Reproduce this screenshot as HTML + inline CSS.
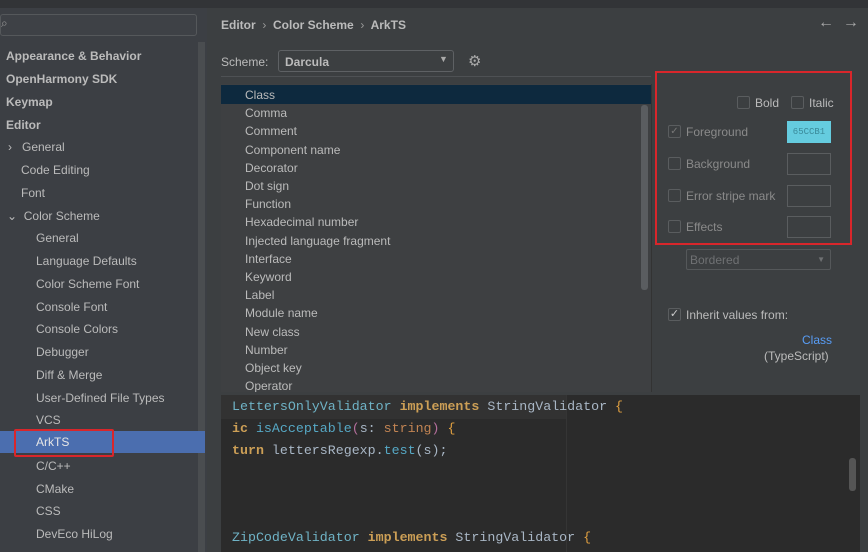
<!DOCTYPE html><html><head><style>
*{margin:0;padding:0;box-sizing:border-box}
body{width:868px;height:552px;overflow:hidden;background:#3c3f41;font-family:"Liberation Sans",sans-serif;font-size:12px;color:#bbbbbb;position:relative}
.a{position:absolute;white-space:nowrap}
.side div{position:absolute;left:0;width:198px;height:22px;line-height:22px}
.b{font-weight:bold}
.list div{position:absolute;left:24px;line-height:18px}
.mono{font-family:"Liberation Mono",monospace;font-size:13.3px}
.cb{position:absolute;width:13px;height:13px;border:1px solid #5a5d5f;border-radius:2px;background:#3c3f41}
.sw{position:absolute;left:787px;width:44px;height:22px;border:1px solid #5a5d5f}
</style></head><body>
<div class="a" style="left:0;top:0;width:868px;height:8px;background:#323437"></div>
<div class="a" style="left:0;top:8px;width:207px;height:544px;background:#3c3f44"></div>
<div class="a" style="left:0;top:14px;width:197px;height:22px;border:1px solid #55585b;border-radius:3px;background:#3e4146"></div>
<div class="a" style="left:1px;top:16px;color:#999">&#x2315;</div>
<div class="a" style="left:198px;top:42px;width:7px;height:510px;background:#4a4d50"></div>
<div class="side" style="position:absolute;left:0;top:1px">
<div class="b" style="top:44px;padding-left:6px">Appearance &amp; Behavior</div>
<div class="b" style="top:67px;padding-left:6px">OpenHarmony SDK</div>
<div class="b" style="top:90px;padding-left:6px">Keymap</div>
<div class="b" style="top:113px;padding-left:6px">Editor</div>
<div style="top:135px;padding-left:8px">›&nbsp;&nbsp; General</div>
<div style="top:158px;padding-left:21px">Code Editing</div>
<div style="top:181px;padding-left:21px">Font</div>
<div style="top:204px;padding-left:7px">⌄&nbsp; Color Scheme</div>
<div style="top:226px;padding-left:36px">General</div>
<div style="top:249px;padding-left:36px">Language Defaults</div>
<div style="top:272px;padding-left:36px">Color Scheme Font</div>
<div style="top:295px;padding-left:36px">Console Font</div>
<div style="top:317px;padding-left:36px">Console Colors</div>
<div style="top:340px;padding-left:36px">Debugger</div>
<div style="top:363px;padding-left:36px">Diff &amp; Merge</div>
<div style="top:386px;padding-left:36px">User-Defined File Types</div>
<div style="top:408px;padding-left:36px">VCS</div>
<div style="top:430px;padding-left:36px;width:205px;background:#4b6eaf;color:#e6e6e6">ArkTS</div>
<div style="top:454px;padding-left:36px">C/C++</div>
<div style="top:477px;padding-left:36px">CMake</div>
<div style="top:499px;padding-left:36px">CSS</div>
<div style="top:522px;padding-left:36px">DevEco HiLog</div>
</div>
<div class="a" style="left:14px;top:429px;width:100px;height:28px;border:2px solid #d9262b;border-radius:2px"></div>
<div class="a b" style="left:221px;top:18px">Editor &nbsp;<span style="font-weight:normal;color:#999">›</span>&nbsp; Color Scheme &nbsp;<span style="font-weight:normal;color:#999">›</span>&nbsp; ArkTS</div>
<div class="a" style="left:818px;top:14px;font-size:16px;color:#aaa">←&nbsp;&nbsp;→</div>
<div class="a" style="left:221px;top:55px">Scheme:</div>
<div class="a" style="left:278px;top:50px;width:176px;height:22px;border:1px solid #5e6164;border-radius:3px;background:#3c3f41"></div>
<div class="a b" style="left:285px;top:55px">Darcula</div>
<div class="a" style="left:439px;top:54px;font-size:9px;color:#aaa">▼</div>
<div class="a" style="left:468px;top:52px;font-size:15px;color:#aaa">⚙</div>
<div class="a" style="left:221px;top:76px;width:430px;height:1px;background:#4e5154"></div>
<div class="a" style="left:221px;top:84px;width:430px;height:308px;background:#3e4042;overflow:hidden">
<div class="a" style="left:0;top:1px;width:430px;height:19px;background:#0d293e"></div>
<div class="list" style="position:absolute;left:0;top:2px">
<div style="top:0">Class</div><div style="top:18px">Comma</div><div style="top:36px">Comment</div><div style="top:55px">Component name</div><div style="top:73px">Decorator</div><div style="top:91px">Dot sign</div><div style="top:109px">Function</div><div style="top:127px">Hexadecimal number</div><div style="top:146px">Injected language fragment</div><div style="top:164px">Interface</div><div style="top:182px">Keyword</div><div style="top:200px">Label</div><div style="top:218px">Module name</div><div style="top:237px">New class</div><div style="top:255px">Number</div><div style="top:273px">Object key</div><div style="top:291px">Operator</div>
</div>
<div class="a" style="left:420px;top:21px;width:7px;height:185px;background:#5a5d60;border-radius:3px"></div>
</div>
<div class="a" style="left:651px;top:84px;width:1px;height:308px;background:#333"></div>
<div class="cb" style="left:737px;top:96px"></div><div class="a" style="left:755px;top:96px">Bold</div>
<div class="cb" style="left:791px;top:96px"></div><div class="a" style="left:809px;top:96px">Italic</div>
<div class="cb" style="left:668px;top:125px;color:#777;font-size:10px;line-height:11px;text-align:center">✓</div><div class="a" style="left:686px;top:125px;color:#8a8a8a">Foreground</div>
<div class="sw" style="top:121px;background:#65ccdf;border-color:#65ccdf;color:#3a8a9a;font-family:'Liberation Mono',monospace;font-size:9px;line-height:20px;text-align:center">65CCB1</div>
<div class="cb" style="left:668px;top:157px"></div><div class="a" style="left:686px;top:157px;color:#8a8a8a">Background</div><div class="sw" style="top:153px"></div>
<div class="cb" style="left:668px;top:189px"></div><div class="a" style="left:686px;top:189px;color:#8a8a8a">Error stripe mark</div><div class="sw" style="top:185px"></div>
<div class="cb" style="left:668px;top:220px"></div><div class="a" style="left:686px;top:220px;color:#8a8a8a">Effects</div><div class="sw" style="top:216px"></div>
<div class="a" style="left:655px;top:71px;width:197px;height:174px;border:2px solid #d9262b"></div>
<div class="a" style="left:686px;top:249px;width:145px;height:21px;border:1px solid #55585a;border-radius:2px;color:#6f7173;padding:3px 0 0 3px">Bordered<span style="position:absolute;right:5px;top:5px;font-size:8px">▼</span></div>
<div class="cb" style="left:668px;top:308px;color:#ccc;font-size:11px;line-height:11px;text-align:center">✓</div><div class="a" style="left:686px;top:308px">Inherit values from:</div>
<div class="a" style="left:802px;top:333px;color:#589df6">Class</div>
<div class="a" style="left:764px;top:349px">(TypeScript)</div>
<div class="a" style="left:221px;top:395px;width:639px;height:157px;background:#2b2b2b"></div>
<div class="a" style="left:221px;top:395px;width:345px;height:24px;background:#323232"></div>
<div class="a" style="left:566px;top:395px;width:1px;height:157px;background:#353535"></div>
<div class="a" style="left:849px;top:458px;width:7px;height:33px;background:#555;border-radius:3px"></div>
<div class="a mono" style="left:232px;top:399px;color:#a9b7c6"><span style="color:#6fb3c6">LettersOnlyValidator</span> <b style="color:#cc9f56">implements</b> StringValidator <span style="color:#e1a040">{</span></div>
<div class="a mono" style="left:232px;top:421px;color:#a9b7c6"><b style="color:#cc9f56">ic</b> <span style="color:#56a8c5">isAcceptable</span><span style="color:#b56f9c">(</span>s: <span style="color:#c28453">string</span><span style="color:#b56f9c">)</span> <span style="color:#e1a040">{</span></div>
<div class="a mono" style="left:232px;top:443px;color:#a9b7c6"><b style="color:#cc9f56">turn</b> lettersRegexp.<span style="color:#56a8c5">test</span>(s);</div>
<div class="a mono" style="left:232px;top:530px;color:#a9b7c6"><span style="color:#6fb3c6">ZipCodeValidator</span> <b style="color:#cc9f56">implements</b> StringValidator <span style="color:#e1a040">{</span></div>
</body></html>
